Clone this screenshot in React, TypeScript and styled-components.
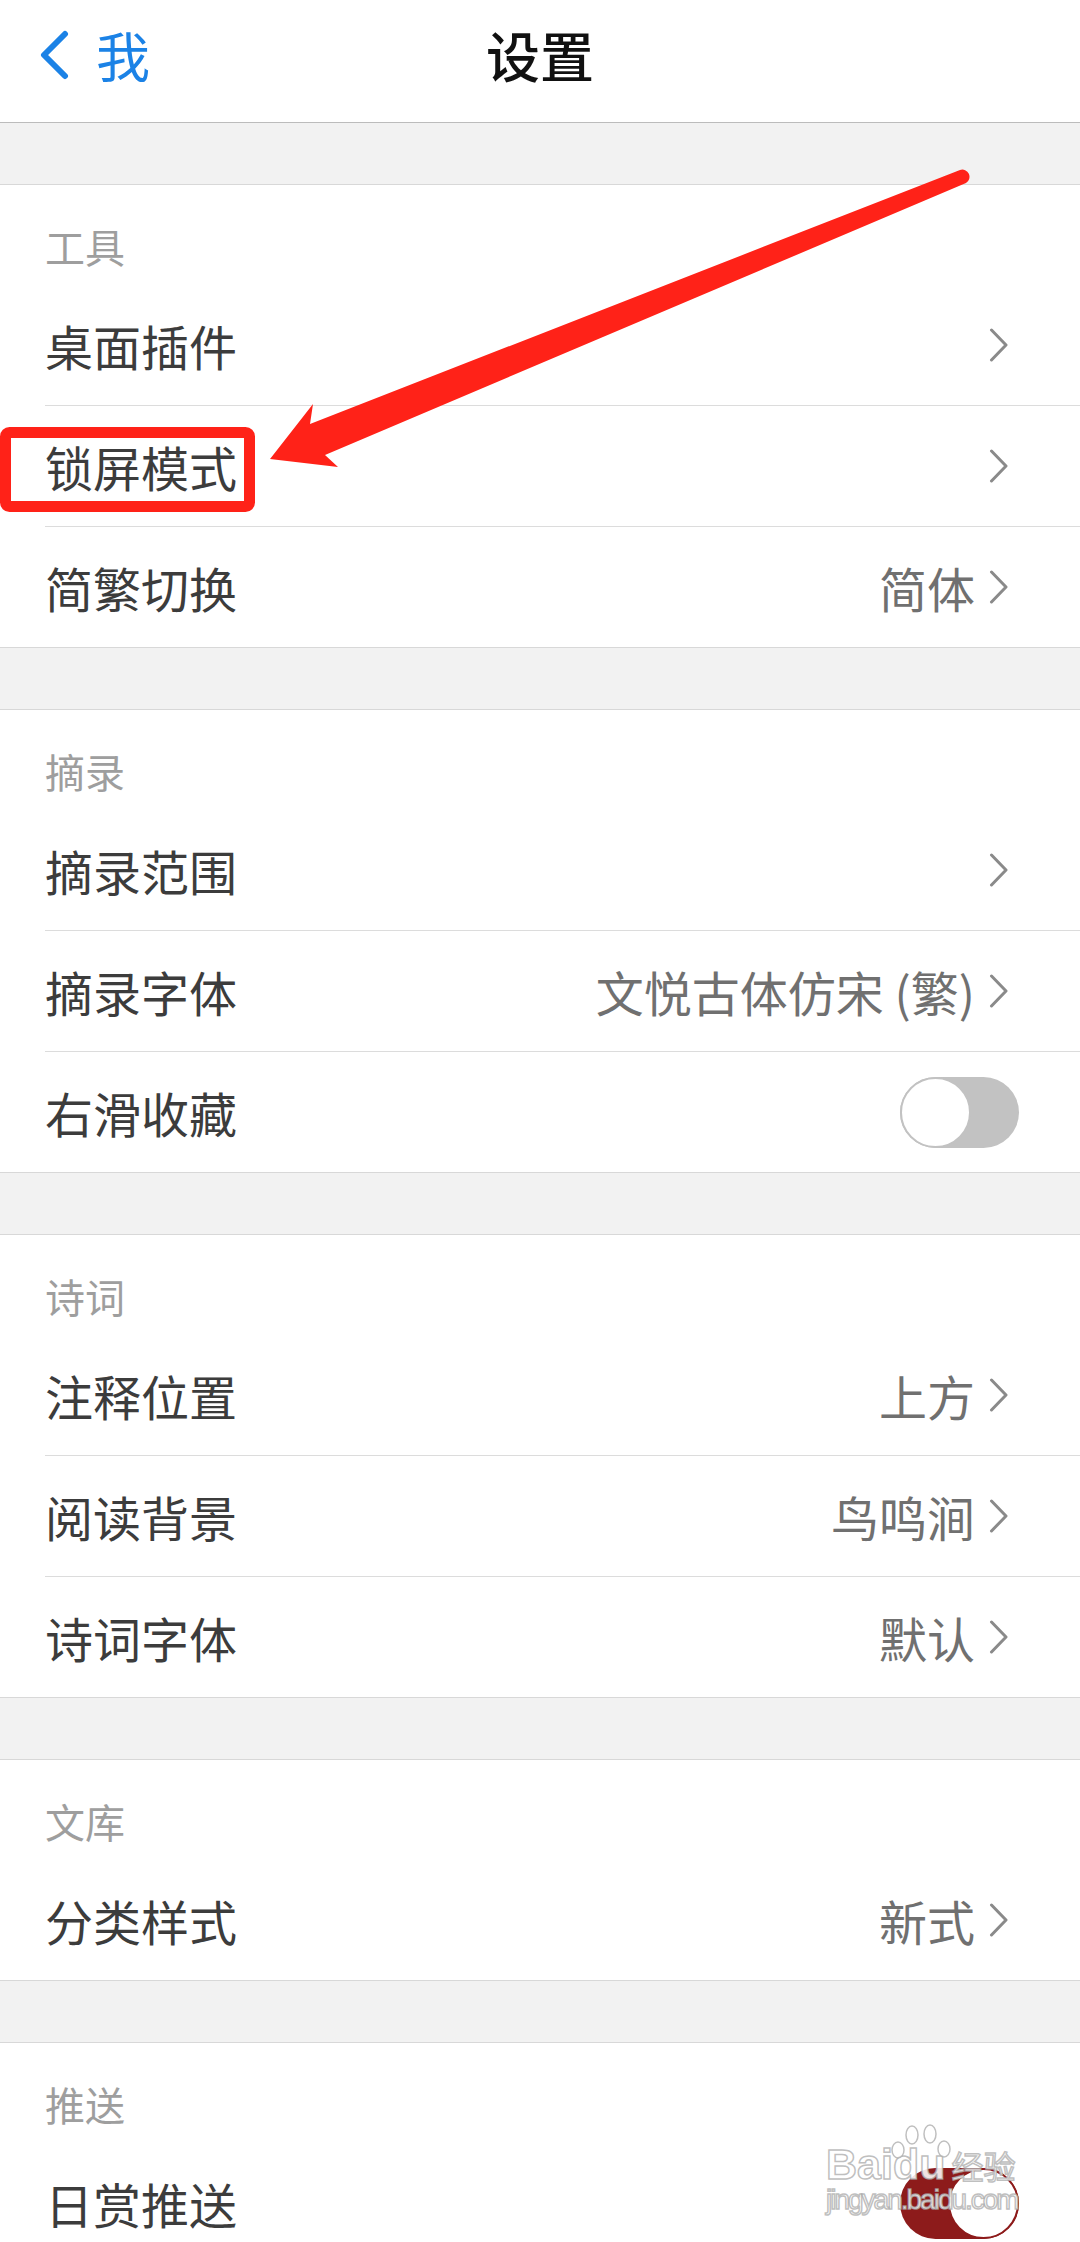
import styled, { createGlobalStyle } from 'styled-components';

type RowData = {
  label: string;
  value?: string;
  toggle?: boolean;
};

type SectionData = {
  title: string;
  rows: RowData[];
};

const SECTIONS: SectionData[] = [
  {
    title: '工具',
    rows: [{ label: '桌面插件' }, { label: '锁屏模式' }, { label: '简繁切换', value: '简体' }],
  },
  {
    title: '摘录',
    rows: [
      { label: '摘录范围' },
      { label: '摘录字体', value: '文悦古体仿宋 (繁)' },
      { label: '右滑收藏', toggle: false },
    ],
  },
  {
    title: '诗词',
    rows: [
      { label: '注释位置', value: '上方' },
      { label: '阅读背景', value: '鸟鸣涧' },
      { label: '诗词字体', value: '默认' },
    ],
  },
  {
    title: '文库',
    rows: [{ label: '分类样式', value: '新式' }],
  },
  {
    title: '推送',
    rows: [{ label: '日赏推送', toggle: true }],
  },
];

const GlobalStyle = createGlobalStyle`
  html, body {
    margin: 0;
    padding: 0;
    background: #f2f2f2;
  }

  body {
    font-family: "Noto Sans CJK SC", "Noto Sans", sans-serif;
  }
`;

const Page = styled.div`
  position: relative;
  width: 1080px;
  height: 2242px;
  overflow: hidden;
  background: #f2f2f2;
`;

const NavBar = styled.header`
  display: grid;
  grid-template-columns: 1fr auto 1fr;
  align-items: center;
  height: 110px;
  padding-bottom: 12px;
  background: #ffffff;
  border-bottom: 1px solid #bcbcbc;
`;

const BackButton = styled.button`
  display: flex;
  align-items: center;
  gap: 27px;
  justify-self: start;
  padding: 0 0 0 39px;
  border: none;
  background: none;
  font-family: inherit;
  font-size: 54px;
  line-height: 54px;
  color: #1b82e6;
  cursor: pointer;

  svg {
    display: block;
    flex-shrink: 0;
  }
`;

const Title = styled.h1`
  margin: 0;
  font-size: 54px;
  line-height: 54px;
  font-weight: 500;
  color: #111111;
`;

const Section = styled.section`
  margin-top: 61px;
  background: #ffffff;
  border-top: 1px solid #d8d8d8;
  border-bottom: 1px solid #d8d8d8;
`;

const SectionTitle = styled.div`
  box-sizing: border-box;
  height: 100px;
  padding: 41px 0 0 45px;
  font-size: 40px;
  line-height: 40px;
  color: #9e9e9e;
`;

const Row = styled.div`
  display: flex;
  padding-left: 45px;
`;

const RowBody = styled.div<{ $divider: boolean }>`
  flex: 1;
  display: flex;
  align-items: center;
  height: 120px;
  padding-right: 61px;
  border-top: ${({ $divider }) => ($divider ? '1px solid #dcdcdc' : 'none')};
`;

const Label = styled.span`
  flex: 1;
  font-size: 48px;
  line-height: 48px;
  color: #3c3c3c;
`;

const Value = styled.span`
  margin-right: 14px;
  font-size: 48px;
  line-height: 48px;
  color: #707070;
`;

const Chevron = styled.svg`
  display: block;
  margin-right: 10px;
`;

const Track = styled.div<{ $on: boolean }>`
  display: flex;
  justify-content: ${({ $on }) => ($on ? 'flex-end' : 'flex-start')};
  width: 119px;
  height: 71px;
  border-radius: 36px;
  background: ${({ $on }) => ($on ? '#8d1b1b' : '#c2c2c2')};
`;

const Knob = styled.span<{ $on: boolean }>`
  box-sizing: border-box;
  width: 71px;
  height: 71px;
  border-radius: 50%;
  background: #ffffff;
  border: 2px solid ${({ $on }) => ($on ? '#8d1b1b' : '#c2c2c2')};
`;

const Annotation = styled.svg`
  position: absolute;
  top: 0;
  left: 0;
  pointer-events: none;
`;

const Watermark = styled.div`
  position: absolute;
  left: 826px;
  top: 2140px;
  display: flex;
  flex-direction: column;
  align-items: flex-start;
  pointer-events: none;
  color: rgba(255, 255, 255, 0.88);
  -webkit-text-stroke: 1.5px rgba(170, 170, 170, 0.75);
`;

const WatermarkBrand = styled.div`
  position: relative;
  display: flex;
  align-items: baseline;
  gap: 6px;
  font-family: "Liberation Sans", sans-serif;
  font-size: 43px;
  line-height: 48px;
  font-weight: 700;
`;

const WatermarkCjk = styled.span`
  font-family: "Noto Sans CJK SC", sans-serif;
  font-size: 32px;
  font-weight: 400;
`;

const Paw = styled.svg`
  position: absolute;
  left: 64px;
  top: -16px;
`;

const WatermarkUrl = styled.div`
  margin-top: -4px;
  font-family: "Liberation Sans", sans-serif;
  font-size: 28px;
  line-height: 30px;
  letter-spacing: -2px;
`;

const ChevronIcon = () => (
  <Chevron width="20" height="34" viewBox="0 0 20 34" aria-hidden>
    <path d="M2.5 2 L17 17 L2.5 32" fill="none" stroke="#8a8a8a" strokeWidth="3" strokeLinecap="round" strokeLinejoin="round" />
  </Chevron>
);

const SettingRow = ({ row, divider }: { row: RowData; divider: boolean }) => (
  <Row>
    <RowBody $divider={divider}>
      <Label>{row.label}</Label>
      {row.toggle === undefined ? (
        <>
          {row.value && <Value>{row.value}</Value>}
          <ChevronIcon />
        </>
      ) : (
        <Track $on={row.toggle}>
          <Knob $on={row.toggle} />
        </Track>
      )}
    </RowBody>
  </Row>
);

export default function App() {
  return (
    <>
      <GlobalStyle />
      <Page>
        <NavBar>
          <BackButton type="button">
            <svg width="30" height="50" viewBox="0 0 30 50" aria-hidden>
              <path d="M26 4 L5 25 L26 46" fill="none" stroke="#1b82e6" strokeWidth="6" strokeLinecap="round" strokeLinejoin="round" />
            </svg>
            我
          </BackButton>
          <Title>设置</Title>
        </NavBar>

        {SECTIONS.map((section) => (
          <Section key={section.title}>
            <SectionTitle>{section.title}</SectionTitle>
            {section.rows.map((row, i) => (
              <SettingRow key={row.label} row={row} divider={i > 0} />
            ))}
          </Section>
        ))}

        {/* red markup drawn over the screenshot */}
        <Annotation width="1080" height="2242" viewBox="0 0 1080 2242" aria-hidden>
          <rect x="5.5" y="432.5" width="244" height="74" rx="4" fill="none" stroke="#ff2218" strokeWidth="11" />
          <path
            d="M270 459 L313 404 L310 424 L960 170 A7.2 7.2 0 0 1 966 183 L325 455 L338 467 Z"
            fill="#ff2218"
          />
        </Annotation>

        <Watermark>
          <WatermarkBrand>
            <Paw width="62" height="42" viewBox="0 0 62 42" aria-hidden>
              <g fill="rgba(255,255,255,0.6)" stroke="rgba(170,170,170,0.75)" strokeWidth="1.5">
                <ellipse cx="8" cy="26" rx="6" ry="8" />
                <ellipse cx="22" cy="11" rx="6" ry="9" />
                <ellipse cx="40" cy="10" rx="6" ry="9" />
                <ellipse cx="54" cy="25" rx="6" ry="8" />
              </g>
            </Paw>
            <span>Baidu</span>
            <WatermarkCjk>经验</WatermarkCjk>
          </WatermarkBrand>
          <WatermarkUrl>jingyan.baidu.com</WatermarkUrl>
        </Watermark>
      </Page>
    </>
  );
}
